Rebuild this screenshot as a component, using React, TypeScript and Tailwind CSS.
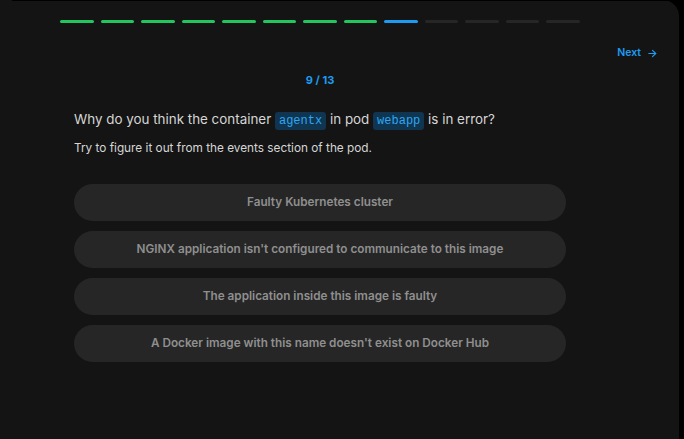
import React from "react";

const segs = Array.from({ length: 13 }, (_, i) => i);

export default function App() {
  const options = [
    "Faulty Kubernetes cluster",
    "NGINX application isn't configured to communicate to this image",
    "The application inside this image is faulty",
    "A Docker image with this name doesn't exist on Docker Hub",
  ];
  return (
    <div className="w-[684px] h-[439px] bg-black overflow-hidden" style={{ fontFamily: "Inter, 'Noto Sans', sans-serif" }}>
      <div className="w-[679px] h-[439px] bg-[#141414] rounded-tr-[16px] flex flex-col">
        <div className="h-px bg-black ml-[12px]" />
        <div className="flex gap-[6.6px] ml-[60px] w-[520px] mt-[19px]">
          {segs.map((i) => (
            <div
              key={i}
              className={
                "h-[3px] flex-1 rounded-full " +
                (i < 8 ? "bg-[#22c55e]" : i === 8 ? "bg-[#1d9bf0]" : "bg-[#262626]")
              }
            />
          ))}
        </div>
        <div className="flex justify-end pr-[21px] mt-[23px]">
          <div className="flex items-center gap-[6px] text-[10.5px] font-semibold text-[#1d9bf0] leading-[14px]">
            Next
            <svg width="11" height="11" viewBox="0 0 24 24" fill="none" stroke="currentColor" strokeWidth="2.5" strokeLinecap="round" strokeLinejoin="round">
              <path d="M4 12h15" />
              <path d="m12 5 7 7-7 7" />
            </svg>
          </div>
        </div>
        <div className="w-[492px] ml-[74px] flex flex-col">
          <div className="text-center text-[11px] font-bold text-[#1d9bf0] mt-[13px] leading-[14px]">9 / 13</div>
          <div className="mt-[21px] text-[13.4px] text-[#d6d6d6] leading-[22px]">
            Why do you think the container{" "}
            <code className="bg-[#0f3550] text-[#2ea6f0] px-[4px] py-[2px] rounded-[3px] text-[12px]" style={{ fontFamily: "'Liberation Mono', monospace" }}>agentx</code>{" "}
            in pod{" "}
            <code className="bg-[#0f3550] text-[#2ea6f0] px-[4px] py-[2px] rounded-[3px] text-[12px]" style={{ fontFamily: "'Liberation Mono', monospace" }}>webapp</code>{" "}
            is in error?
          </div>
          <div className="mt-[7px] text-[11.8px] text-[#d6d6d6] leading-[18px]">Try to figure it out from the events section of the pod.</div>
          <div className="mt-[27px] flex flex-col gap-[10px]">
            {options.map((o) => (
              <div key={o} className="h-[37px] rounded-full bg-[#262626] flex items-center justify-center text-[11.75px] font-semibold text-[#8f8f8f]">
                {o}
              </div>
            ))}
          </div>
        </div>
      </div>
    </div>
  );
}
